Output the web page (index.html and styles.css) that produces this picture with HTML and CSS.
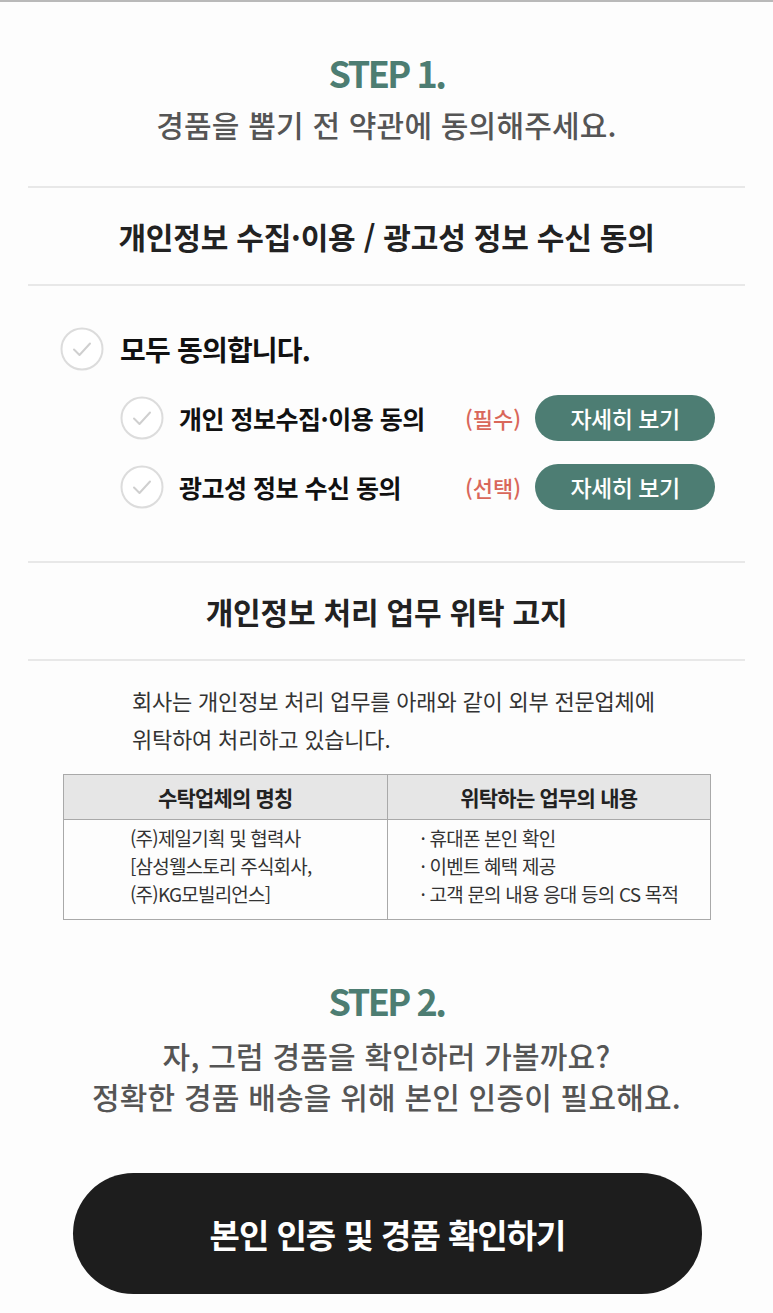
FILE: index.html
```html
<!DOCTYPE html>
<html lang="ko">
<head>
<meta charset="utf-8">
<title>경품 약관 동의</title>
<link rel="stylesheet" href="styles.css">
</head>
<body>
<div class="page">
  <section class="step step-1">
    <h1 class="step-title">STEP 1.</h1>
    <p class="step-desc">경품을 뽑기 전 약관에 동의해주세요.</p>
  </section>

  <hr class="divider">
  <h2 class="section-title">개인정보 수집·이용 / 광고성 정보 수신 동의</h2>
  <hr class="divider">

  <div class="agree">
    <div class="agree-all">
      <span class="check check-lg"><svg viewBox="0 0 44 44"><circle cx="22" cy="22" r="20.5" /><path d="M14 22.5 L19.5 28 L30 16.5" /></svg></span>
      <span class="agree-all-label">모두 동의합니다.</span>
    </div>
    <div class="agree-row">
      <span class="check"><svg viewBox="0 0 44 44"><circle cx="22" cy="22" r="20.5" /><path d="M14 22.5 L19.5 28 L30 16.5" /></svg></span>
      <span class="agree-label">개인 정보수집·이용 동의</span>
      <span class="tag">(필수)</span>
      <button class="detail-btn">자세히 보기</button>
    </div>
    <div class="agree-row">
      <span class="check"><svg viewBox="0 0 44 44"><circle cx="22" cy="22" r="20.5" /><path d="M14 22.5 L19.5 28 L30 16.5" /></svg></span>
      <span class="agree-label">광고성 정보 수신 동의</span>
      <span class="tag">(선택)</span>
      <button class="detail-btn">자세히 보기</button>
    </div>
  </div>

  <hr class="divider">
  <h2 class="section-title">개인정보 처리 업무 위탁 고지</h2>
  <hr class="divider">

  <p class="notice">회사는 개인정보 처리 업무를 아래와 같이 외부 전문업체에<br>위탁하여 처리하고 있습니다.</p>

  <table class="trust-table">
    <thead>
      <tr><th>수탁업체의 명칭</th><th>위탁하는 업무의 내용</th></tr>
    </thead>
    <tbody>
      <tr>
        <td class="col-left">(주)제일기획 및 협력사<br>[삼성웰스토리 주식회사,<br>(주)KG모빌리언스]</td>
        <td class="col-right">· 휴대폰 본인 확인<br>· 이벤트 혜택 제공<br>· 고객 문의 내용 응대 등의 CS 목적</td>
      </tr>
    </tbody>
  </table>

  <section class="step step-2">
    <h1 class="step-title">STEP 2.</h1>
    <p class="step-desc">자, 그럼 경품을 확인하러 가볼까요?<br>정확한 경품 배송을 위해 본인 인증이 필요해요.</p>
  </section>

  <div class="cta-wrap">
    <button class="cta">본인 인증 및 경품 확인하기</button>
  </div>
</div>
</body>
</html>
```

FILE: styles.css
```css
* { box-sizing: border-box; }
html, body { margin: 0; padding: 0; }
body {
  background: #fdfdfd;
  font-family: "Noto Sans CJK KR", "Noto Sans", sans-serif;
  color: #222;
  border-top: 2px solid #b9b9b9;
}
.page {
  width: 773px;
  padding: 0 28px;
}
.step { text-align: center; }
.step-1 { padding-top: 48px; padding-bottom: 42px; }
.step-title {
  margin: 0;
  font-size: 36px;
  line-height: 44px;
  font-weight: 700;
  color: #4d7d72;
  letter-spacing: -2.5px;
}
.step-desc {
  margin: 10px 0 0;
  font-size: 30px;
  line-height: 40px;
  font-weight: 500;
  color: #555;
  letter-spacing: 0.2px;
}
.divider {
  margin: 0;
  border: 0;
  height: 2px;
  background: #e8e8e8;
}
.section-title {
  margin: 0;
  text-align: center;
  font-size: 30px;
  line-height: 96px;
  font-weight: 700;
  color: #222;
  letter-spacing: -0.2px;
}
.agree {
  padding: 41px 0 51px 32px;
}
.check {
  display: inline-flex;
  width: 44px;
  height: 44px;
  flex: none;
}
.check svg { width: 100%; height: 100%; }
.check circle { fill: #fff; stroke: #dcdcdc; stroke-width: 2; }
.check path { fill: none; stroke: #cfcfcf; stroke-width: 2; stroke-linecap: round; stroke-linejoin: round; }
.agree-all {
  display: flex;
  align-items: center;
  gap: 16px;
}
.agree-all-label {
  font-size: 28px;
  font-weight: 700;
  color: #111;
  letter-spacing: -0.8px;
}
.agree-row {
  display: flex;
  align-items: center;
  margin-left: 60px;
  margin-top: 23px;
}
.agree-all + .agree-row { margin-top: 24px; }
.agree-row .check { margin-right: 15px; }
.agree-label {
  font-size: 25px;
  font-weight: 700;
  color: #111;
  letter-spacing: -0.5px;
  width: 286px;
}
.tag {
  font-size: 22px;
  font-weight: 500;
  color: #d9675a;
  width: 70px;
}
.detail-btn {
  width: 180px;
  height: 46px;
  border: 0;
  border-radius: 23px;
  background: #4d7d73;
  color: #fff;
  font-family: inherit;
  font-size: 23px;
  font-weight: 500;
  letter-spacing: -0.5px;
  padding: 0;
}
.notice {
  margin: 20px 0 0;
  padding-left: 104px;
  font-size: 22px;
  line-height: 38px;
  color: #333;
  letter-spacing: -0.2px;
}
.trust-table {
  margin: 17px 0 0 35px;
  width: 648px;
  border-collapse: collapse;
  font-size: 19px;
  letter-spacing: -0.8px;
  color: #333;
}
.trust-table th,
.trust-table td {
  border: 1.5px solid #a9a9a9;
}
.trust-table th {
  width: 50%;
  height: 45px;
  background: #e6e6e6;
  font-weight: 700;
  font-size: 21px;
  color: #222;
  padding: 0;
}
.trust-table td {
  vertical-align: top;
  line-height: 28px;
  padding: 4px 0 11px;
}
.trust-table td.col-left { padding-left: 66px; }
.trust-table td.col-right { padding-left: 33px; }
.step-2 { padding-top: 58px; }
.step-2 .step-desc { margin-top: 13px; line-height: 41px; }
.cta-wrap {
  padding: 56px 43px 0 45px;
}
.cta {
  display: block;
  width: 629px;
  height: 121px;
  border: 0;
  border-radius: 61px;
  background: #1d1d1d;
  color: #fff;
  font-family: inherit;
  font-size: 33px;
  font-weight: 700;
  letter-spacing: -1px;
  padding: 0;
}
```
